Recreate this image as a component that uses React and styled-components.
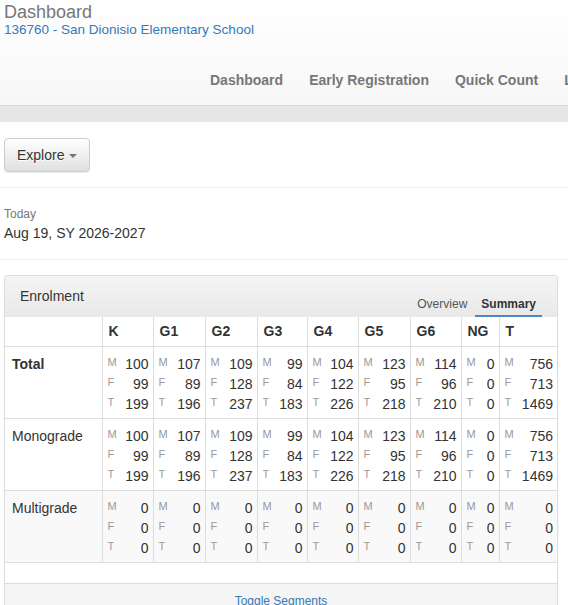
import React from 'react';
import styled, { createGlobalStyle } from 'styled-components';

const GlobalStyle = createGlobalStyle`
  html, body {
    margin: 0;
    padding: 0;
    overflow-x: hidden;
    background: #fff;
  }
  body {
    font-family: "Liberation Sans", Arial, Helvetica, sans-serif;
    font-size: 14px;
    line-height: 20px;
    color: #333;
  }
  * { box-sizing: border-box; }
`;

const grades = [
  { key: 'K', width: 51, total: [100, 99, 199], mono: [100, 99, 199] },
  { key: 'G1', width: 52, total: [107, 89, 196], mono: [107, 89, 196] },
  { key: 'G2', width: 52, total: [109, 128, 237], mono: [109, 128, 237] },
  { key: 'G3', width: 50, total: [99, 84, 183], mono: [99, 84, 183] },
  { key: 'G4', width: 51, total: [104, 122, 226], mono: [104, 122, 226] },
  { key: 'G5', width: 52, total: [123, 95, 218], mono: [123, 95, 218] },
  { key: 'G6', width: 51, total: [114, 96, 210], mono: [114, 96, 210] },
  { key: 'NG', width: 38, total: [0, 0, 0], mono: [0, 0, 0] },
  { key: 'T', width: 58, total: [756, 713, 1469], mono: [756, 713, 1469] },
];

const rows = [
  { name: 'Total', bold: true, field: 'total' },
  { name: 'Monograde', bold: false, field: 'mono' },
  { name: 'Multigrade', bold: false, field: null, striped: true },
];

const App = () => {
  return (
    <>
      <GlobalStyle />
      <Header>
        <Brand>
          <Title>Dashboard</Title>
          <SchoolLink href="#">136760 - San Dionisio Elementary School</SchoolLink>
        </Brand>
        <Nav>
          <NavItem>Dashboard</NavItem>
          <NavItem>Early Registration</NavItem>
          <NavItem>Quick Count</NavItem>
          <NavItem>Learners</NavItem>
        </Nav>
      </Header>
      <GrayBar />

      <Toolbar>
        <ExploreButton>
          Explore <Caret />
        </ExploreButton>
      </Toolbar>
      <Rule />

      <DateBlock>
        <SmallLabel>Today</SmallLabel>
        <DateText>Aug 19, SY 2026-2027</DateText>
      </DateBlock>
      <Rule />

      <Panel>
        <PanelHeading>
          <PanelTitle>Enrolment</PanelTitle>
          <Tabs>
            <Tab>Overview</Tab>
            <Tab $active>Summary</Tab>
          </Tabs>
        </PanelHeading>

        <Table>
          <colgroup>
            <col style={{ width: 97 }} />
            {grades.map((g) => (
              <col key={g.key} style={{ width: g.width }} />
            ))}
          </colgroup>
          <thead>
            <tr>
              <HeadCell />
              {grades.map((g) => (
                <HeadCell key={g.key}>{g.key}</HeadCell>
              ))}
            </tr>
          </thead>
          <tbody>
            {rows.map((r) => (
              <Row key={r.name} $striped={r.striped}>
                <RowLabel $bold={r.bold}>{r.name}</RowLabel>
                {grades.map((g) => {
                  const vals = r.field ? g[r.field] : [0, 0, 0];
                  return (
                    <DataCell key={g.key}>
                      <Counts>
                        {['M', 'F', 'T'].map((l, i) => (
                          <React.Fragment key={l}>
                            <Letter>{l}</Letter>
                            <Num>{vals[i]}</Num>
                          </React.Fragment>
                        ))}
                      </Counts>
                    </DataCell>
                  );
                })}
              </Row>
            ))}
          </tbody>
        </Table>
        <PanelBody />
        <PanelFooter>
          <FooterLink href="#">Toggle Segments</FooterLink>
        </PanelFooter>
      </Panel>
    </>
  );
};

const Header = styled.header`
  height: 106px;
  background: linear-gradient(to bottom, #ffffff 0%, #f7f7f7 100%);
  border-bottom: 1px solid #d9d9d9;
  overflow: hidden;
  white-space: nowrap;
`;

const Brand = styled.div`
  padding: 2px 4px 0;
`;

const Title = styled.div`
  font-size: 18px;
  line-height: 20px;
  color: #777;
`;

const SchoolLink = styled.a`
  display: block;
  font-size: 13.5px;
  line-height: 16px;
  color: #337ab7;
  text-decoration: none;
`;

const Nav = styled.ul`
  display: flex;
  list-style: none;
  margin: 32px 0 0 197px;
  padding: 0;
`;

const NavItem = styled.li`
  padding: 0 13px;
  font-size: 14px;
  line-height: 20px;
  font-weight: bold;
  color: #777;
  flex-shrink: 0;
`;

const GrayBar = styled.div`
  height: 16px;
  background: #e6e6e6;
`;

const Toolbar = styled.div`
  padding: 16px 4px 15px;
`;

const ExploreButton = styled.button`
  display: inline-flex;
  align-items: center;
  height: 34px;
  padding: 6px 12px;
  font-family: inherit;
  font-size: 14px;
  line-height: 20px;
  color: #333;
  background: linear-gradient(to bottom, #ffffff 0%, #e0e0e0 100%);
  border: 1px solid #ccc;
  border-radius: 4px;
  box-shadow: inset 0 1px 0 rgba(255, 255, 255, 0.15), 0 1px 1px rgba(0, 0, 0, 0.075);
  text-shadow: 0 1px 0 #fff;
`;

const Caret = styled.span`
  display: inline-block;
  width: 0;
  height: 0;
  margin-left: 5px;
  margin-top: 2px;
  border-top: 4px solid #777;
  border-left: 4px solid transparent;
  border-right: 4px solid transparent;
`;

const Rule = styled.hr`
  margin: 0;
  border: 0;
  border-top: 1px solid #eee;
`;

const DateBlock = styled.div`
  padding: 18px 4px 16px;
`;

const SmallLabel = styled.div`
  font-size: 12px;
  line-height: 17px;
  color: #777;
`;

const DateText = styled.div`
  font-size: 14px;
  line-height: 20px;
  color: #333;
`;

const Panel = styled.section`
  width: 554px;
  margin: 15px 0 0 4px;
  border: 1px solid #ddd;
  border-radius: 4px 4px 0 0;
  border-bottom: 0;
  background: #fff;
  box-shadow: 0 1px 2px rgba(0, 0, 0, 0.05);
`;

const PanelHeading = styled.div`
  display: flex;
  justify-content: space-between;
  height: 41px;
  background: linear-gradient(to bottom, #f5f5f5 0%, #e8e8e8 100%);
  border-radius: 3px 3px 0 0;
`;

const PanelTitle = styled.div`
  padding: 10px 15px;
  font-size: 14px;
  line-height: 20px;
  color: #333;
`;

const Tabs = styled.div`
  display: flex;
  align-items: flex-end;
  gap: 2px;
  margin-right: 15px;
`;

const Tab = styled.div`
  padding: 2px 6px 3px;
  font-size: 12px;
  line-height: 16px;
  color: ${(p) => (p.$active ? '#333' : '#555')};
  font-weight: ${(p) => (p.$active ? 'bold' : 'normal')};
  border-bottom: 2px solid ${(p) => (p.$active ? '#4a89c4' : 'transparent')};
`;

const Table = styled.table`
  width: 100%;
  table-layout: fixed;
  border-collapse: collapse;
`;

const HeadCell = styled.th`
  padding: 4px 5px 5px 6px;
  font-size: 14px;
  line-height: 20px;
  font-weight: bold;
  text-align: left;
  color: #333;
  border-left: 1px solid #ddd;
  &:first-child { border-left: 0; }
`;

const Row = styled.tr`
  background: ${(p) => (p.$striped ? '#f9f9f9' : '#fff')};
  border-top: 1px solid #ddd;
  border-bottom: 1px solid #ddd;
`;

const RowLabel = styled.td`
  padding: 7px 5px 4px 7px;
  vertical-align: top;
  font-size: 14px;
  line-height: 20px;
  font-weight: ${(p) => (p.$bold ? 'bold' : 'normal')};
  color: #333;
`;

const DataCell = styled.td`
  padding: 7px 4px 4px 5px;
  vertical-align: top;
  border-left: 1px solid #ddd;
`;

const Counts = styled.div`
  display: grid;
  grid-template-columns: auto 1fr;
  column-gap: 3px;
`;

const Letter = styled.span`
  font-size: 11px;
  line-height: 16px;
  height: 20px;
  color: #999;
`;

const Num = styled.span`
  font-size: 14px;
  line-height: 20px;
  text-align: right;
  color: #333;
`;

const PanelBody = styled.div`
  height: 20px;
`;

const PanelFooter = styled.div`
  padding: 6px 15px 4px;
  text-align: center;
  background: #f5f5f5;
  border-top: 1px solid #ddd;
`;

const FooterLink = styled.a`
  font-size: 12px;
  line-height: 17px;
  color: #337ab7;
  text-decoration: none;
`;

export default App;
